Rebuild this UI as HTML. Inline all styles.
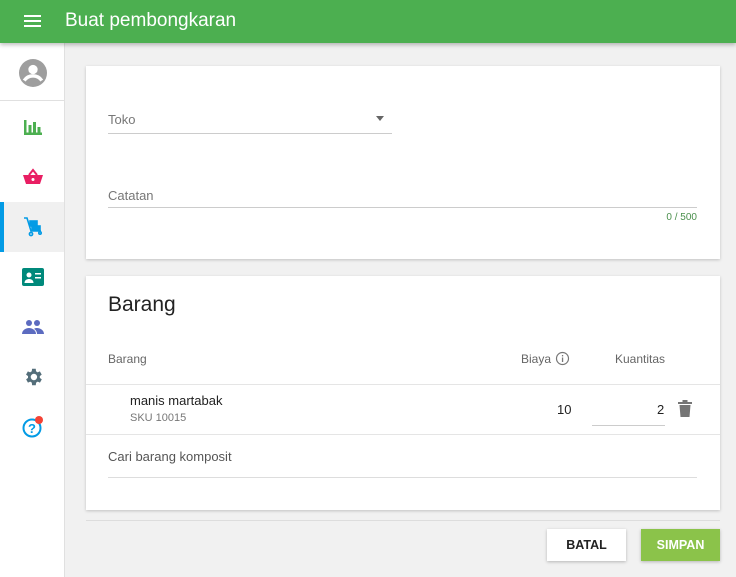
<!DOCTYPE html>
<html><head><style>
*{box-sizing:border-box;margin:0;padding:0}
body{width:736px;height:577px;overflow:hidden;background:#f1f1f1;font-family:"Liberation Sans",sans-serif;position:relative}
.top{position:absolute;left:0;top:0;width:736px;height:43px;background:#4caf50;box-shadow:0 2px 4px rgba(0,0,0,.25);z-index:2}
.top .t{position:absolute;left:65px;top:10px;color:#fff;font-size:19px}
.ham{position:absolute;left:24px;top:15px;width:17px;height:2px;background:#fff;box-shadow:0 5px 0 #fff,0 10px 0 #fff}
.side{position:absolute;left:0;top:43px;width:65px;height:534px;background:#fff;border-right:1px solid #e0e0e0}
.ic{position:absolute;left:0;width:65px;height:50px;display:flex;align-items:center;justify-content:center}
.card{position:absolute;left:86px;width:634px;background:#fff;box-shadow:0 1px 3px rgba(0,0,0,.2)}
.lbl{position:absolute;font-size:13px;color:#777}
.line{position:absolute;height:1px;background:#ddd}
.s{position:absolute;font-size:12px;color:#666}
.btn{position:absolute;top:529px;height:32px;width:79px;font-size:12.5px;font-weight:bold;display:flex;align-items:center;justify-content:center;box-shadow:0 1px 3px rgba(0,0,0,.25)}
</style></head><body>
<div class="top"><div class="ham"></div><div class="t">Buat pembongkaran</div></div>
<div class="side">
<div class="ic" style="top:5px"><svg width="28" height="28" viewBox="0 0 24 24"><circle cx="12" cy="12" r="12" fill="#9e9e9e"/><circle cx="12" cy="9" r="4" fill="#fff"/><path d="M4.5 18.5c2-3 5-4 7.5-4s5.5 1 7.5 4" stroke="#fff" stroke-width="3" fill="none"/></svg></div>
<div style="position:absolute;top:57px;left:0;width:65px;height:1px;background:#e0e0e0"></div>
<div class="ic" style="top:59px"><svg width="20" height="20" viewBox="0 0 20 20" fill="#4caf50"><rect x="1" y="3" width="2.5" height="15"/><rect x="1" y="15.5" width="18" height="2.5"/><rect x="5.5" y="8" width="3" height="9"/><rect x="10" y="5" width="3" height="12"/><rect x="14.5" y="10" width="3" height="7"/></svg></div>
<div class="ic" style="top:109px"><svg width="22" height="20" viewBox="0 0 22 20"><path d="M7 8l4-5 4 5" stroke="#e91e63" stroke-width="2" fill="none"/><path d="M1 8h20l-3 9H4z" fill="#e91e63"/><circle cx="11" cy="12.5" r="1.5" fill="#fff"/></svg></div>
<div style="position:absolute;top:159px;left:0;width:64px;height:50px;background:#f0f0f0;border-left:4px solid #039be5"></div>
<div class="ic" style="top:159px"><svg width="22" height="22" viewBox="0 0 22 22" fill="none" stroke="#039be5" stroke-width="1.6"><path d="M2 2h3l4 13h10"/><rect x="8" y="5" width="7" height="5" fill="#039be5"/><rect x="10" y="10" width="8" height="4" fill="#039be5"/><circle cx="9" cy="18" r="1.6"/><circle cx="18" cy="17" r="1.2"/></svg></div>
<div class="ic" style="top:209px"><svg width="22" height="18" viewBox="0 0 22 18"><rect width="22" height="18" rx="2" fill="#00897b"/><circle cx="7" cy="7" r="2.5" fill="#fff"/><path d="M2.5 15c0-3 2.5-4 4.5-4s4.5 1 4.5 4z" fill="#fff"/><rect x="13" y="5" width="6" height="1.5" fill="#fff"/><rect x="13" y="9" width="6" height="1.5" fill="#fff"/></svg></div>
<div class="ic" style="top:259px"><svg width="22" height="16" viewBox="0 0 22 16" fill="#5c6bc0"><circle cx="7" cy="4" r="3"/><circle cx="15" cy="4" r="3"/><path d="M0 15c0-4 4-6 7-6s7 2 7 6z"/><path d="M12 10c1-1 2-1 3-1 3 0 7 2 7 6h-7c0-2-1-4-3-5z"/></svg></div>
<div class="ic" style="top:309px"><svg width="22" height="22" viewBox="0 0 24 24" fill="#546e7a"><path d="M19.4 13a7.5 7.5 0 000-2l2.1-1.6-2-3.5-2.5 1a7 7 0 00-1.7-1L15 3h-4l-.4 2.9a7 7 0 00-1.7 1l-2.5-1-2 3.5L6.6 11a7.5 7.5 0 000 2l-2.1 1.6 2 3.5 2.5-1a7 7 0 001.7 1L11 21h4l.4-2.9a7 7 0 001.7-1l2.5 1 2-3.5zM13 15.5a3.5 3.5 0 110-7 3.5 3.5 0 010 7z"/></svg></div>
<div class="ic" style="top:359px"><svg width="26" height="26" viewBox="0 0 26 26"><circle cx="12" cy="14" r="8.5" fill="none" stroke="#039be5" stroke-width="2"/><text x="12" y="19" text-anchor="middle" font-size="13" font-weight="bold" fill="#039be5" font-family="Liberation Sans">?</text><circle cx="19" cy="6" r="4" fill="#f44336"/></svg></div>
</div>

<div class="card" style="top:66px;height:193px">
<div class="lbl" style="left:22px;top:46px">Toko</div>
<div style="position:absolute;left:290px;top:50px;border:4px solid transparent;border-top:5px solid #666"></div>
<div class="line" style="left:22px;top:67px;width:284px;background:#ccc"></div>
<div class="lbl" style="left:22px;top:122px">Catatan</div>
<div class="line" style="left:22px;top:141px;width:589px;background:#ccc"></div>
<div style="position:absolute;right:23px;top:146px;font-size:10px;color:#4a8f4c">0 / 500</div>
</div>

<div class="card" style="top:276px;height:234px">
<div style="position:absolute;left:22px;top:17px;font-size:21px;color:#222">Barang</div>
<div class="s" style="left:22px;top:76px">Barang</div>
<div class="s" style="left:435px;top:76px">Biaya</div>
<svg style="position:absolute;left:469px;top:75px" width="15" height="15" viewBox="0 0 15 15"><circle cx="7.5" cy="7.5" r="6" fill="none" stroke="#777" stroke-width="1.2"/><rect x="6.9" y="6.5" width="1.3" height="4.5" fill="#777"/><rect x="6.9" y="4" width="1.3" height="1.4" fill="#777"/></svg>
<div class="s" style="left:529px;top:76px">Kuantitas</div>
<div class="line" style="left:0;top:108px;width:634px;background:#e5e5e5"></div>
<div style="position:absolute;left:44px;top:117px;font-size:13px;color:#222">manis martabak</div>
<div style="position:absolute;left:44px;top:136px;font-size:11px;color:#777">SKU 10015</div>
<div style="position:absolute;left:471px;top:126px;font-size:13px;color:#222">10</div>
<div style="position:absolute;left:571px;top:126px;font-size:13px;color:#222">2</div>
<div class="line" style="left:506px;top:149px;width:73px;background:#ccc"></div>
<svg style="position:absolute;left:592px;top:124px" width="14" height="17" viewBox="0 0 14 17" fill="#757575"><rect x="0" y="2" width="14" height="2"/><rect x="4.5" y="0" width="5" height="2"/><path d="M1.5 5h11l-1 12h-9z"/></svg>
<div class="line" style="left:0;top:158px;width:634px;background:#e5e5e5"></div>
<div class="lbl" style="left:22px;top:173px;color:#555">Cari barang komposit</div>
<div class="line" style="left:22px;top:201px;width:589px;background:#ddd"></div>
</div>
<div class="line" style="left:86px;top:520px;width:634px;background:#ddd"></div>
<div class="btn" style="left:547px;background:#fff;color:#222">BATAL</div>
<div class="btn" style="left:641px;background:#8bc34a;color:#fff">SIMPAN</div>
</body></html>
